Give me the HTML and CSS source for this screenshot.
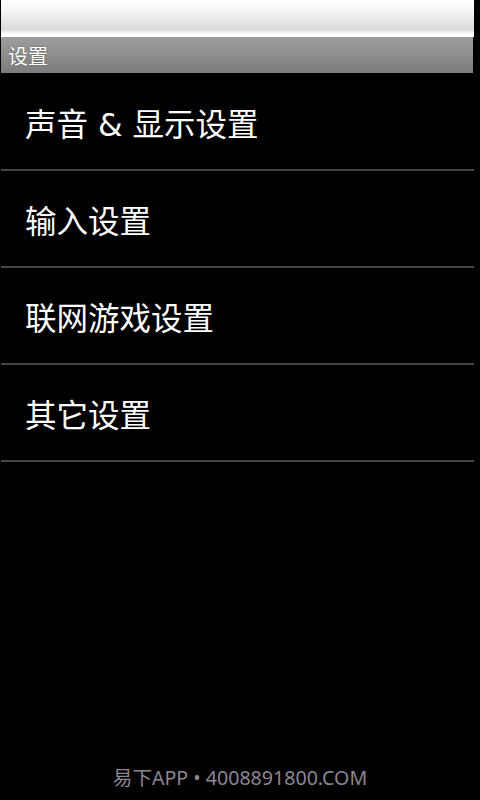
FILE: index.html
```
<!DOCTYPE html>
<html lang="zh">
<head>
<meta charset="utf-8">
<title>设置</title>
<link rel="stylesheet" href="styles.css">
</head>
<body>
<div class="screen">
  <div class="statusbar"></div>
  <div class="titlebar">设置</div>
  <ul class="menu">
    <li class="item">声音 &amp; 显示设置</li>
    <li class="item">输入设置</li>
    <li class="item">联网游戏设置</li>
    <li class="item">其它设置</li>
  </ul>
  <div class="footer">易下APP • 4008891800.COM</div>
</div>
</body>
</html>
```
FILE: styles.css
```
html, body {
  margin: 0;
  padding: 0;
  background: #000;
}
.screen {
  width: 480px;
  height: 800px;
  display: flex;
  flex-direction: column;
  background: #000;
  font-family: "Noto Sans CJK SC", "Noto Sans", sans-serif;
}
.statusbar {
  width: 473px;
  margin-left: 1px;
  height: 37px;
  background: linear-gradient(to bottom, #ffffff 0px, #f6f6f6 10px, #e2e2e2 24px, #d9d9d9 29px, #eeeeee 32px, #ffffff 34px, #ffffff 37px);
}
.titlebar {
  width: 465px;
  margin-left: 1px;
  height: 36px;
  padding-left: 7px;
  display: flex;
  align-items: center;
  color: #fff;
  font-size: 20px;
  background: linear-gradient(to bottom, #9d9d9d, #8a8a8a 60%, #7c7c7c);
  text-shadow: 0 0 2px rgba(0,0,0,0.35);
}
.menu {
  list-style: none;
  margin: 0;
  padding: 1px 0 0 0;
  width: 473px;
  margin-left: 1px;
}
.item {
  height: 95px;
  display: flex;
  align-items: center;
  padding-left: 24px;
  color: #fff;
  font-family: "DejaVu Sans", "Noto Sans CJK SC", sans-serif;
  font-size: 31.5px;
  border-bottom: 2px solid #454545;
}
.footer {
  margin-top: auto;
  height: 32px;
  text-align: center;
  color: #8c8690;
  font-family: "Noto Sans", "Noto Sans CJK SC", sans-serif;
  font-size: 19.6px;
  line-height: 20px;
}
```
